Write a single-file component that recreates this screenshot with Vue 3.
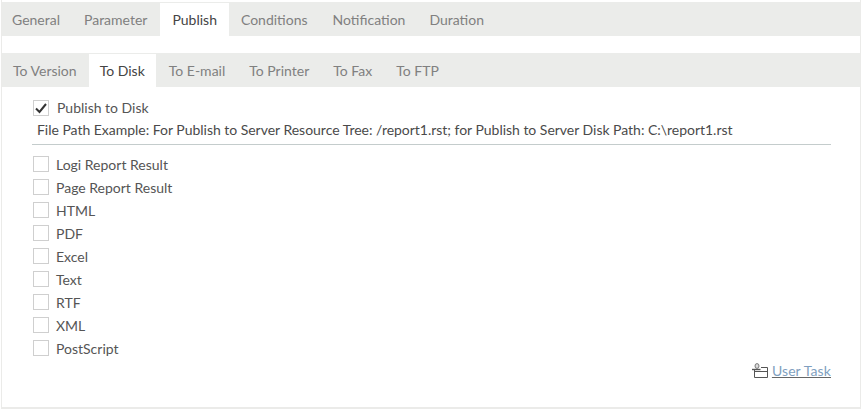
<script setup>
const mainTabs = ['General', 'Parameter', 'Publish', 'Conditions', 'Notification', 'Duration']
const subTabs = ['To Version', 'To Disk', 'To E-mail', 'To Printer', 'To Fax', 'To FTP']
const formats = ['Logi Report Result', 'Page Report Result', 'HTML', 'PDF', 'Excel', 'Text', 'RTF', 'XML', 'PostScript']
</script>

<template>
  <div class="panel">
    <div class="tabs main">
      <div v-for="t in mainTabs" :key="t" class="tab" :class="{ active: t === 'Publish' }">{{ t }}</div>
    </div>
    <div class="tabs sub">
      <div v-for="t in subTabs" :key="t" class="tab" :class="{ active: t === 'To Disk' }">{{ t }}</div>
    </div>
    <div class="body">
      <div class="publish-row">
        <span class="box">
          <svg width="14" height="14" viewBox="0 0 14 14"><path d="M2 7.5 L5.5 11 L12 3" fill="none" stroke="#333" stroke-width="2" /></svg>
        </span>
        <span class="publish-label">Publish to Disk</span>
      </div>
      <div class="example">File Path Example: For Publish to Server Resource Tree: /report1.rst; for Publish to Server Disk Path: C:\report1.rst</div>
      <div class="rule"></div>
      <div class="formats">
        <div v-for="f in formats" :key="f" class="format">
          <span class="box"></span>
          <span>{{ f }}</span>
        </div>
      </div>
      <div class="footer">
        <svg width="16" height="15" viewBox="0 0 16 15">
          <ellipse cx="5" cy="3" rx="2" ry="2.4" fill="#ddd" stroke="#777" stroke-width="1" />
          <path d="M0 6.5 H8.5" fill="none" stroke="#555" stroke-width="1.4" />
          <path d="M2.5 7 V14.5 H15.5 V4.5 H9 M2.5 8.5 H15.5" fill="none" stroke="#555" stroke-width="1" />
        </svg>
        <a class="link">User Task</a>
      </div>
    </div>
  </div>
</template>

<style scoped>
.panel {
  box-sizing: border-box;
  width: 860px;
  height: 409px;
  margin-left: 1px;
  padding-top: 2px;
  background: #fff;
  border-left: 1px solid #ebebe9;
  border-right: 1px solid #ebebe9;
  border-bottom: 2px solid #ebebe9;
  font-family: Lato, sans-serif;
  font-size: 14px;
  color: #555;
}
.tabs {
  display: flex;
  height: 34px;
  background: #ebecea;
}
.tab {
  padding: 0 12px;
  line-height: 36px;
  color: #808080;
}
.tab.active {
  background: #fff;
  color: #444;
  margin-top: 1px;
  line-height: 34px;
}
.sub {
  margin-top: 17px;
}
.sub .tab:first-child {
  padding-left: 11px;
  padding-right: 12px;
}
.sub .tab.active {
  padding-left: 11px;
  padding-right: 11.5px;
}
.sub .tab:nth-child(3) {
  padding-left: 12.5px;
}
.main .tab:first-child {
  padding-left: 10px;
}
.main .tab:nth-child(2),
.main .tab:nth-child(4) {
  padding-right: 13px;
}
.body {
  padding: 13px 29px 0 31px;
}
.publish-row {
  display: flex;
  align-items: center;
  gap: 8px;
  height: 16px;
}
.publish-label {
  padding-bottom: 2px;
}
.box {
  box-sizing: border-box;
  flex: none;
  width: 16px;
  height: 16px;
  border: 1px solid #cfcfcf;
  background: #fff;
  display: flex;
  align-items: center;
  justify-content: center;
}
.example {
  margin: 4px 0 0 4px;
  line-height: 20px;
  color: #4a4a4a;
  white-space: nowrap;
  letter-spacing: -0.02px;
}
.rule {
  height: 1px;
  margin: 4px 0 0 -1px;
  background: #c4cccc;
}
.formats {
  margin-top: 11px;
  display: flex;
  flex-direction: column;
  gap: 7px;
}
.format {
  display: flex;
  align-items: center;
  gap: 7px;
  height: 16px;
}
.footer {
  display: flex;
  justify-content: flex-end;
  align-items: center;
  gap: 4px;
  margin-top: 5px;
  height: 18px;
}
.link {
  color: #7f9fc0;
  letter-spacing: 0.1px;
  text-decoration: underline;
  text-decoration-color: #666;
}
</style>
